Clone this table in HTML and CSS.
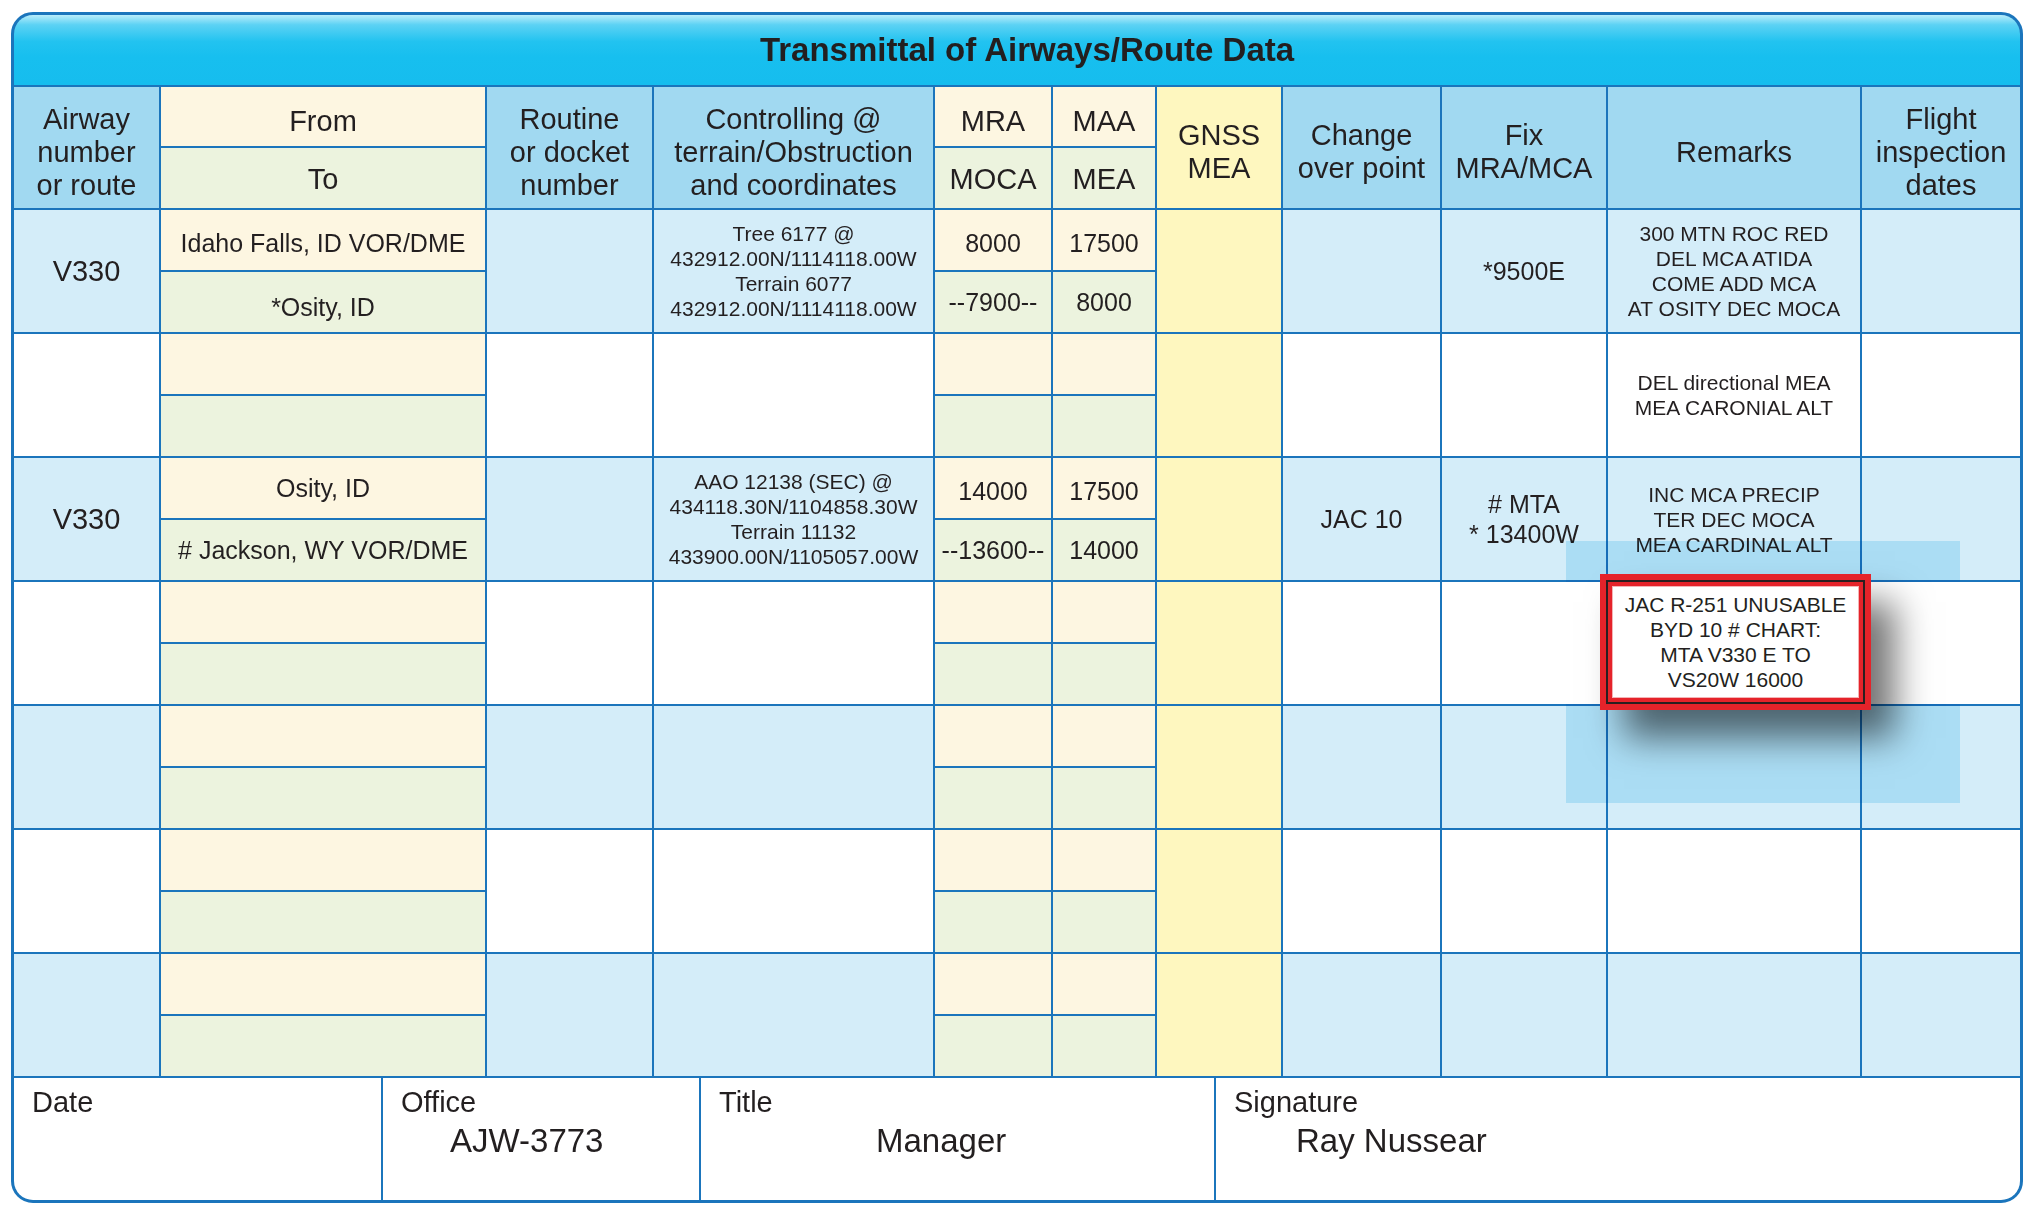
FILE: index.html
```html
<!DOCTYPE html>
<html lang="en">
<head>
<meta charset="utf-8">
<title>Transmittal of Airways/Route Data</title>
<link rel="stylesheet" href="styles.css">
</head>
<body>
<div class="sheet">
  <div class="frame">
    <div class="titlebar">Transmittal of Airways/Route Data</div>
    <div class="grid">
      <div class="h hb span">Airway<br>number<br>or route</div>
      <div class="h cream top">From</div>
      <div class="h hb span">Routine<br>or docket<br>number</div>
      <div class="h hb span">Controlling @<br>terrain/Obstruction<br>and coordinates</div>
      <div class="h cream top">MRA</div>
      <div class="h cream top">MAA</div>
      <div class="h yellow span">GNSS<br>MEA</div>
      <div class="h hb span">Change<br>over point</div>
      <div class="h hb span">Fix<br>MRA/MCA</div>
      <div class="h hb span">Remarks</div>
      <div class="h hb span">Flight<br>inspection<br>dates</div>
      <div class="h green low">To</div>
      <div class="h green low">MOCA</div>
      <div class="h green low">MEA</div>

      <div class="row alt">
        <div class="c span big">V330</div>
        <div class="c cream mid sub">Idaho Falls, ID VOR/DME</div>
        <div class="c span"></div>
        <div class="c span small">Tree 6177 @<br>432912.00N/1114118.00W<br>Terrain 6077<br>432912.00N/1114118.00W</div>
        <div class="c cream mid sub">8000</div>
        <div class="c cream mid sub">17500</div>
        <div class="c yellow span"></div>
        <div class="c span"></div>
        <div class="c span mid">*9500E</div>
        <div class="c span small">300 MTN ROC RED<br>DEL MCA ATIDA<br>COME ADD MCA<br>AT OSITY DEC MOCA</div>
        <div class="c span"></div>
        <div class="c green mid subx">*Osity, ID</div>
        <div class="c green mid">--7900--</div>
        <div class="c green mid">8000</div>
      </div>

      <div class="row">
        <div class="c span"></div>
        <div class="c cream"></div>
        <div class="c span"></div>
        <div class="c span"></div>
        <div class="c cream"></div>
        <div class="c cream"></div>
        <div class="c yellow span"></div>
        <div class="c span"></div>
        <div class="c span"></div>
        <div class="c span small">DEL directional MEA<br>MEA CARONIAL ALT</div>
        <div class="c span"></div>
        <div class="c green"></div>
        <div class="c green"></div>
        <div class="c green"></div>
      </div>

      <div class="row alt">
        <div class="c span big">V330</div>
        <div class="c cream mid">Osity, ID</div>
        <div class="c span"></div>
        <div class="c span small">AAO 12138 (SEC) @<br>434118.30N/1104858.30W<br>Terrain 11132<br>433900.00N/1105057.00W</div>
        <div class="c cream mid sub">14000</div>
        <div class="c cream mid sub">17500</div>
        <div class="c yellow span"></div>
        <div class="c span mid">JAC 10</div>
        <div class="c span mid">#&nbsp;MTA<br>*&nbsp;13400W</div>
        <div class="c span small">INC MCA PRECIP<br>TER DEC MOCA<br>MEA CARDINAL ALT</div>
        <div class="c span"></div>
        <div class="c green mid">#&nbsp;Jackson, WY VOR/DME</div>
        <div class="c green mid">--13600--</div>
        <div class="c green mid">14000</div>
      </div>

      <div class="row">
        <div class="c span"></div>
        <div class="c cream"></div>
        <div class="c span"></div>
        <div class="c span"></div>
        <div class="c cream"></div>
        <div class="c cream"></div>
        <div class="c yellow span"></div>
        <div class="c span"></div>
        <div class="c span"></div>
        <div class="c span"></div>
        <div class="c span"></div>
        <div class="c green"></div>
        <div class="c green"></div>
        <div class="c green"></div>
      </div>

      <div class="row alt">
        <div class="c span"></div>
        <div class="c cream"></div>
        <div class="c span"></div>
        <div class="c span"></div>
        <div class="c cream"></div>
        <div class="c cream"></div>
        <div class="c yellow span"></div>
        <div class="c span"></div>
        <div class="c span"></div>
        <div class="c span"></div>
        <div class="c span"></div>
        <div class="c green"></div>
        <div class="c green"></div>
        <div class="c green"></div>
      </div>

      <div class="row">
        <div class="c span"></div>
        <div class="c cream"></div>
        <div class="c span"></div>
        <div class="c span"></div>
        <div class="c cream"></div>
        <div class="c cream"></div>
        <div class="c yellow span"></div>
        <div class="c span"></div>
        <div class="c span"></div>
        <div class="c span"></div>
        <div class="c span"></div>
        <div class="c green"></div>
        <div class="c green"></div>
        <div class="c green"></div>
      </div>

      <div class="row alt">
        <div class="c span"></div>
        <div class="c cream"></div>
        <div class="c span"></div>
        <div class="c span"></div>
        <div class="c cream"></div>
        <div class="c cream"></div>
        <div class="c yellow span"></div>
        <div class="c span"></div>
        <div class="c span"></div>
        <div class="c span"></div>
        <div class="c span"></div>
        <div class="c green"></div>
        <div class="c green"></div>
        <div class="c green"></div>
      </div>
    </div>

    <div class="footer">
      <div class="f f-date"><div class="label">Date</div></div>
      <div class="f f-office"><div class="label">Office</div><div class="value">AJW-3773</div></div>
      <div class="f f-title"><div class="label">Title</div><div class="value">Manager</div></div>
      <div class="f f-sign"><div class="label">Signature</div><div class="value">Ray Nussear</div></div>
    </div>
  </div>

  <div class="glow glow-top"></div>
  <div class="glow glow-bottom"></div>
  <div class="popup">
    <div class="popup-line">
      <div class="popup-body">JAC R-251 UNUSABLE<br>BYD 10 # CHART:<br>MTA V330 E TO<br>VS20W 16000</div>
    </div>
  </div>
</div>
</body>
</html>
```

FILE: styles.css
```css
* { box-sizing: border-box; }

body {
  margin: 0;
  background: #ffffff;
  font-family: "Liberation Sans", Arial, sans-serif;
  color: #231f20;
}

.sheet {
  position: relative;
  margin: 12px 0 0 11px;
  width: 2012px;
}

.frame {
  border: 3px solid #1b75bc;
  border-radius: 22px;
  overflow: hidden;
  background: #1b75bc;
}

.titlebar {
  height: 72px;
  border-bottom: 2px solid #1b75bc;
  background: linear-gradient(#b9edfb 0%, #5cd2f4 14%, #22c3f0 38%, #17bfef 60%, #16bdee 100%);
  display: flex;
  align-items: center;
  justify-content: center;
  padding-left: 20px;
  font-weight: bold;
  font-size: 33px;
  color: #231f20;
}

.grid {
  display: grid;
  grid-template-columns: 145px 324px 165px 279px 116px 102px 124px 157px 164px 252px 158px;
  grid-template-rows: 59px 60px repeat(14, 60px);
  gap: 2px;
  padding-bottom: 2px;
  background: #1b75bc;
}

.row { display: contents; }
.alt { --bg: #d4edf9; }

.h, .c {
  display: flex;
  align-items: center;
  justify-content: center;
  text-align: center;
  background: var(--bg, #ffffff);
}

.span { grid-row: span 2; }

.h {
  font-size: 29px;
  line-height: 33px;
}
.h.span { padding-top: 9px; }
.h.top { padding-top: 10px; }
.h.low { padding-top: 2px; }
.hb { background: #a1d9f1; }

.cream { background: #fdf6e1; }
.green { background: #ecf3de; }
.yellow { background: #fef7bf; }

.big { font-size: 29px; line-height: 33px; }
.mid { font-size: 25px; line-height: 30px; }
.small { font-size: 21px; line-height: 25px; }
.sub { padding-top: 5px; }
.subx { padding-top: 10px; }

.footer {
  display: flex;
  height: 122px;
  background: #ffffff;
}
.f {
  padding: 8px 0 0 18px;
}
.f + .f { border-left: 2px solid #1b75bc; }
.f-date { width: 367px; }
.f-office { width: 318px; }
.f-title { width: 515px; }
.f-sign { flex: 1; }

.label {
  font-size: 29px;
  line-height: 32px;
}
.value {
  font-size: 33px;
  line-height: 38px;
  margin-top: 4px;
}
.f-office .value { padding-left: 49px; }
.f-title .value { padding-left: 157px; }
.f-sign .value { padding-left: 62px; }

.glow {
  position: absolute;
  left: 1555px;
  width: 394px;
  background: rgb(206, 238, 250);
  mix-blend-mode: multiply;
}
.glow-top { top: 529px; height: 41px; }
.glow-bottom { top: 692px; height: 99px; }

.popup {
  position: absolute;
  left: 1589px;
  top: 562px;
  width: 271px;
  height: 136px;
  padding: 6px;
  background: #e5232a;
  box-shadow: 24px 28px 34px rgba(0, 0, 0, 0.55);
}
.popup-line {
  height: 100%;
  border: 2px solid #2a1f20;
  padding: 4px;
  background: #e5232a;
}
.popup-body {
  height: 100%;
  background: #ffffff;
  border: 1px solid #f4b3b5;
  display: flex;
  align-items: center;
  justify-content: center;
  text-align: center;
  font-size: 21px;
  line-height: 25px;
}
```
